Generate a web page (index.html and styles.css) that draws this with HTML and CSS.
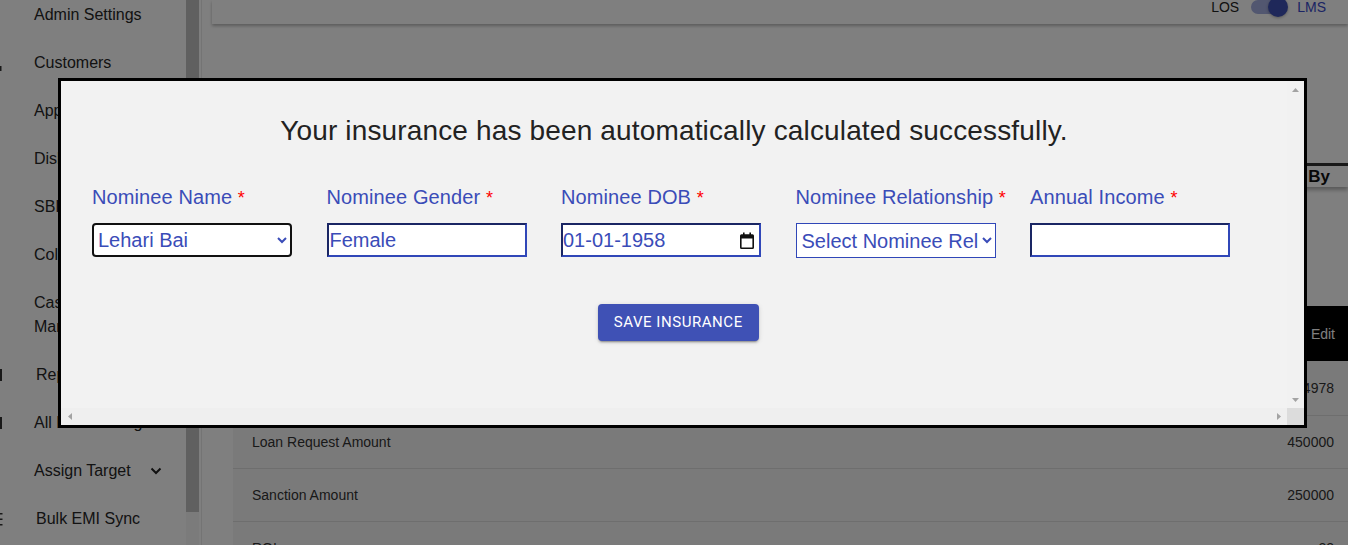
FILE: index.html
```html
<!DOCTYPE html>
<html lang="en">
<head>
<meta charset="utf-8">
<title>Loan Details - Insurance</title>
<link rel="stylesheet" href="styles.css">
</head>
<body>
<div class="app">
  <aside class="sidebar">
    <nav class="nav">
      <div class="nav-item"><span class="nav-icon"></span><span class="nav-text">Admin Settings</span></div>
      <div class="nav-item"><span class="nav-icon"><svg width="3" height="24" viewBox="0 0 3 24"><rect x="0" y="15" width="1.5" height="5" fill="#333"/></svg></span><span class="nav-text">Customers</span></div>
      <div class="nav-item"><span class="nav-icon"></span><span class="nav-text">Applications</span></div>
      <div class="nav-item"><span class="nav-icon"></span><span class="nav-text">Disbursement</span></div>
      <div class="nav-item"><span class="nav-icon"></span><span class="nav-text">SBI Collection</span></div>
      <div class="nav-item"><span class="nav-icon"></span><span class="nav-text">Collections</span></div>
      <div class="nav-item"><span class="nav-icon"></span><span class="nav-text">Case Management</span></div>
      <div class="nav-item"><span class="nav-icon wide"><svg width="3" height="24" viewBox="0 0 3 24"><rect x="0" y="6" width="2" height="12" fill="#333"/></svg></span><span class="nav-text">Reports</span></div>
      <div class="nav-item"><span class="nav-icon"><svg width="3" height="24" viewBox="0 0 3 24"><rect x="0" y="6" width="2" height="12" fill="#333"/></svg></span><span class="nav-text">All Loan Listing</span></div>
      <div class="nav-item"><span class="nav-icon"></span><span class="nav-text">Assign Target</span>
        <svg class="chev" width="12" height="8" viewBox="0 0 12 8"><polyline points="1.5,1.5 6,6 10.5,1.5" fill="none" stroke="#222" stroke-width="2"/></svg>
      </div>
      <div class="nav-item"><span class="nav-icon wide"><svg width="3" height="24" viewBox="0 0 3 24"><rect x="0" y="6" width="2.5" height="1.5" fill="#333"/><rect x="0" y="11.5" width="2.5" height="1.5" fill="#333"/><rect x="0" y="17" width="2.5" height="1.5" fill="#333"/></svg></span><span class="nav-text">Bulk EMI Sync</span></div>
    </nav>
    <div class="side-scroll"><div class="side-thumb"></div></div>
  </aside>

  <main class="main">
    <header class="topbar">
      <div class="switch-row">
        <span class="los">LOS</span>
        <span class="switch"><span class="track"></span><span class="thumb"></span></span>
        <span class="lms">LMS</span>
      </div>
    </header>

    <div class="content">
      <div class="summary">
        <span class="summary-cell">Loan Id</span>
        <span class="summary-cell">Status</span>
        <span class="summary-cell last">Created By</span>
      </div>

      <div class="table-head"><span>Edit</span></div>
      <div class="row row-first"><span>Loan Account Number</span><span>4978</span></div>
      <div class="row"><span>Loan Request Amount</span><span>450000</span></div>
      <div class="row"><span>Sanction Amount</span><span>250000</span></div>
      <div class="row"><span>ROI</span><span>22</span></div>
    </div>
  </main>
</div>

<div class="backdrop"></div>

<div class="modal">
  <div class="modal-body">
    <h2 class="modal-title">Your insurance has been automatically calculated successfully.</h2>
    <div class="form-wrap">
      <form class="nominee-form">
        <div class="field">
          <label class="lbl">Nominee Name <span class="req">*</span></label>
          <select class="ctl ctl-focus"><option>Lehari Bai</option></select>
        </div>
        <div class="field">
          <label class="lbl">Nominee Gender <span class="req">*</span></label>
          <input class="ctl ctl-inset" type="text" value="Female">
        </div>
        <div class="field">
          <label class="lbl">Nominee DOB <span class="req">*</span></label>
          <div class="ctl ctl-inset date-box">
            <input class="date-text" type="text" value="01-01-1958">
            <svg class="cal" width="16" height="17" viewBox="0 0 16 17"><path fill="#111" fill-rule="evenodd" d="M4 0.5h1.6v1.7h4.8V0.5H12v1.7h1.5A1.5 1.5 0 0 1 15 3.7v11.8a1.5 1.5 0 0 1-1.5 1.5h-11A1.5 1.5 0 0 1 1 15.5V3.7a1.5 1.5 0 0 1 1.5-1.5H4z M2.6 6.6v8.8h10.8V6.6z"/></svg>
          </div>
        </div>
        <div class="field">
          <label class="lbl">Nominee Relationship <span class="req">*</span></label>
          <select class="ctl ctl-thin"><option>Select Nominee Relationship</option></select>
        </div>
        <div class="field">
          <label class="lbl">Annual Income <span class="req">*</span></label>
          <input class="ctl ctl-inset" type="text" value="">
        </div>
      </form>
      <div class="actions"><button class="btn" type="button">Save Insurance</button></div>
    </div>
  </div>
  <div class="vbar">
    <span class="sb-btn"><svg width="7" height="4" viewBox="0 0 7 4"><polygon points="0,4 3.5,0 7,4" fill="#a3a3a3"/></svg></span>
    <span class="sb-btn"><svg width="7" height="4" viewBox="0 0 7 4"><polygon points="0,0 7,0 3.5,4" fill="#a3a3a3"/></svg></span>
  </div>
  <div class="hbar">
    <span class="sb-btn"><svg width="4" height="7" viewBox="0 0 4 7"><polygon points="4,0 4,7 0,3.5" fill="#a3a3a3"/></svg></span>
    <span class="sb-btn"><svg width="4" height="7" viewBox="0 0 4 7"><polygon points="0,0 4,3.5 0,7" fill="#a3a3a3"/></svg></span>
  </div>
  <div class="corner"></div>
</div>
</body>
</html>
```

FILE: styles.css
```css
* { box-sizing: border-box; }

html, body {
  margin: 0;
  height: 100%;
}

body {
  font-family: "Liberation Sans", Arial, sans-serif;
  background: #fff;
  color: #333;
  overflow: hidden;
}

.app {
  display: flex;
  height: 545px;
}

/* ---------- sidebar ---------- */
.sidebar {
  display: flex;
  width: 202px;
  flex: none;
  background: #fff;
  border-right: 1px solid #e8e8e8;
}

.nav {
  width: 186px;
  margin-top: -9px;
}

.nav-item {
  display: flex;
  align-items: center;
  padding: 12px 0;
  font-size: 16px;
  line-height: 24px;
  color: #262626;
}

.nav-icon {
  flex: none;
  width: 34px;
  height: 24px;
  display: flex;
  align-items: flex-start;
}

.nav-icon.wide { width: 36px; }

.nav-text { max-width: 122px; }

.chev { margin-left: 19px; }

.side-scroll {
  width: 13px;
  background: #f6f6f6;
}

.side-thumb {
  height: 512px;
  background: #c0c0c0;
}

/* ---------- main ---------- */
.main {
  flex: 1;
  min-width: 0;
  padding-left: 10px;
}

.topbar {
  height: 24px;
  background: #fff;
  box-shadow: 0 2px 3px rgba(0, 0, 0, 0.28);
  display: flex;
  justify-content: flex-end;
  padding-right: 22px;
}

.switch-row {
  display: flex;
  align-items: center;
  height: 14px;
  font-size: 14px;
  line-height: 14px;
}

.los { color: #222; }
.lms { color: #3848c8; }

.switch {
  position: relative;
  width: 58px;
  height: 14px;
  display: flex;
  align-items: center;
}

.track {
  margin-left: 12px;
  width: 34px;
  height: 14px;
  border-radius: 7px;
  background: #a4aee0;
}

.thumb {
  position: absolute;
  left: 29px;
  top: -3px;
  width: 20px;
  height: 20px;
  border-radius: 50%;
  background: #3f51b5;
  box-shadow: 0 1px 3px rgba(0, 0, 0, 0.3);
}

.content {
  padding-left: 21px;
}

.summary {
  margin-top: 139px;
  height: 24px;
  display: flex;
  justify-content: flex-end;
  border-top: 3px solid #333;
  box-shadow: 0 3px 4px rgba(0, 0, 0, 0.3);
  background: #fff;
  font-weight: bold;
  font-size: 17px;
  line-height: 21px;
  color: #111;
}

.summary-cell { padding: 0 0 0 40px; }
.summary-cell.last { padding-right: 18px; }

.table-head {
  margin-top: 119px;
  height: 55px;
  background: #000;
  color: #fff;
  font-size: 14px;
  display: flex;
  align-items: center;
  justify-content: flex-end;
  padding-right: 13px;
}

.row {
  height: 53px;
  display: flex;
  align-items: center;
  justify-content: space-between;
  padding: 0 14px 0 19px;
  background: #f5f5f5;
  border-bottom: 1px solid #dcdcdc;
  font-size: 14px;
  color: #333;
}

.row-first { height: 55px; }

/* ---------- backdrop + modal ---------- */
.backdrop {
  position: fixed;
  inset: 0;
  background: rgba(0, 0, 0, 0.5);
}

.modal {
  position: fixed;
  left: 58px;
  top: 78px;
  width: 1249px;
  height: 350px;
  border: 3px solid #000;
  background: #f2f2f2;
  display: grid;
  grid-template-columns: 1fr 17px;
  grid-template-rows: 1fr 17px;
}

.modal-body {
  min-width: 0;
  overflow: hidden;
}

.modal-title {
  margin: 34px 0 0;
  text-align: center;
  font-size: 28px;
  line-height: 32px;
  letter-spacing: 0.15px;
  font-weight: normal;
  color: #222;
}

.form-wrap {
  padding: 38px 22.5px 0 31px;
}

.nominee-form {
  display: grid;
  grid-template-columns: repeat(5, 1fr);
}

.field {
  display: flex;
  flex-direction: column;
  align-items: flex-start;
}

.lbl {
  font-size: 20px;
  line-height: 24px;
  letter-spacing: 0.1px;
  color: #3a4cb8;
  margin-bottom: 13px;
  white-space: nowrap;
}

.req { color: #f00; font-size: 18px; }

.ctl {
  width: 200px;
  height: 34px;
  font-family: "Liberation Sans", Arial, sans-serif;
  font-size: 20px;
  color: #3a4cb8;
  background: #fff;
  margin: 0;
}

.ctl-focus {
  border: 2px solid #111;
  border-radius: 4px;
  padding: 0;
}

.ctl-inset {
  border: 2px inset #3047b8;
  padding: 0 1px;
}

.ctl-thin {
  border: 1px solid #3047b8;
  border-radius: 0;
  padding: 0 1px;
  height: 35px;
}

.date-box {
  display: flex;
  align-items: center;
  justify-content: space-between;
  padding: 0 4px 0 0;
}

.date-text {
  border: 0;
  outline: 0;
  background: transparent;
  font: inherit;
  color: inherit;
  width: 150px;
  padding: 0;
}

.cal { margin-top: 1px; }

.actions {
  display: flex;
  justify-content: center;
  padding-top: 46px;
}

.btn {
  font-family: Roboto, "Liberation Sans", sans-serif;
  font-weight: 400;
  font-size: 15px;
  line-height: 25px;
  letter-spacing: 0.55px;
  text-transform: uppercase;
  color: #fff;
  background: #3f51b5;
  border: 0;
  border-radius: 4px;
  padding: 6px 16px;
  box-shadow: 0 3px 1px -2px rgba(0, 0, 0, 0.2), 0 2px 2px 0 rgba(0, 0, 0, 0.14), 0 1px 5px 0 rgba(0, 0, 0, 0.12);
}

/* fake classic scrollbars */
.vbar {
  display: flex;
  flex-direction: column;
  justify-content: space-between;
  background: #f1f1f1;
}

.hbar {
  display: flex;
  justify-content: space-between;
  background: #efefef;
}

.sb-btn {
  width: 17px;
  height: 17px;
  display: flex;
  align-items: center;
  justify-content: center;
}

.corner { background: #dcdcdc; }
```
